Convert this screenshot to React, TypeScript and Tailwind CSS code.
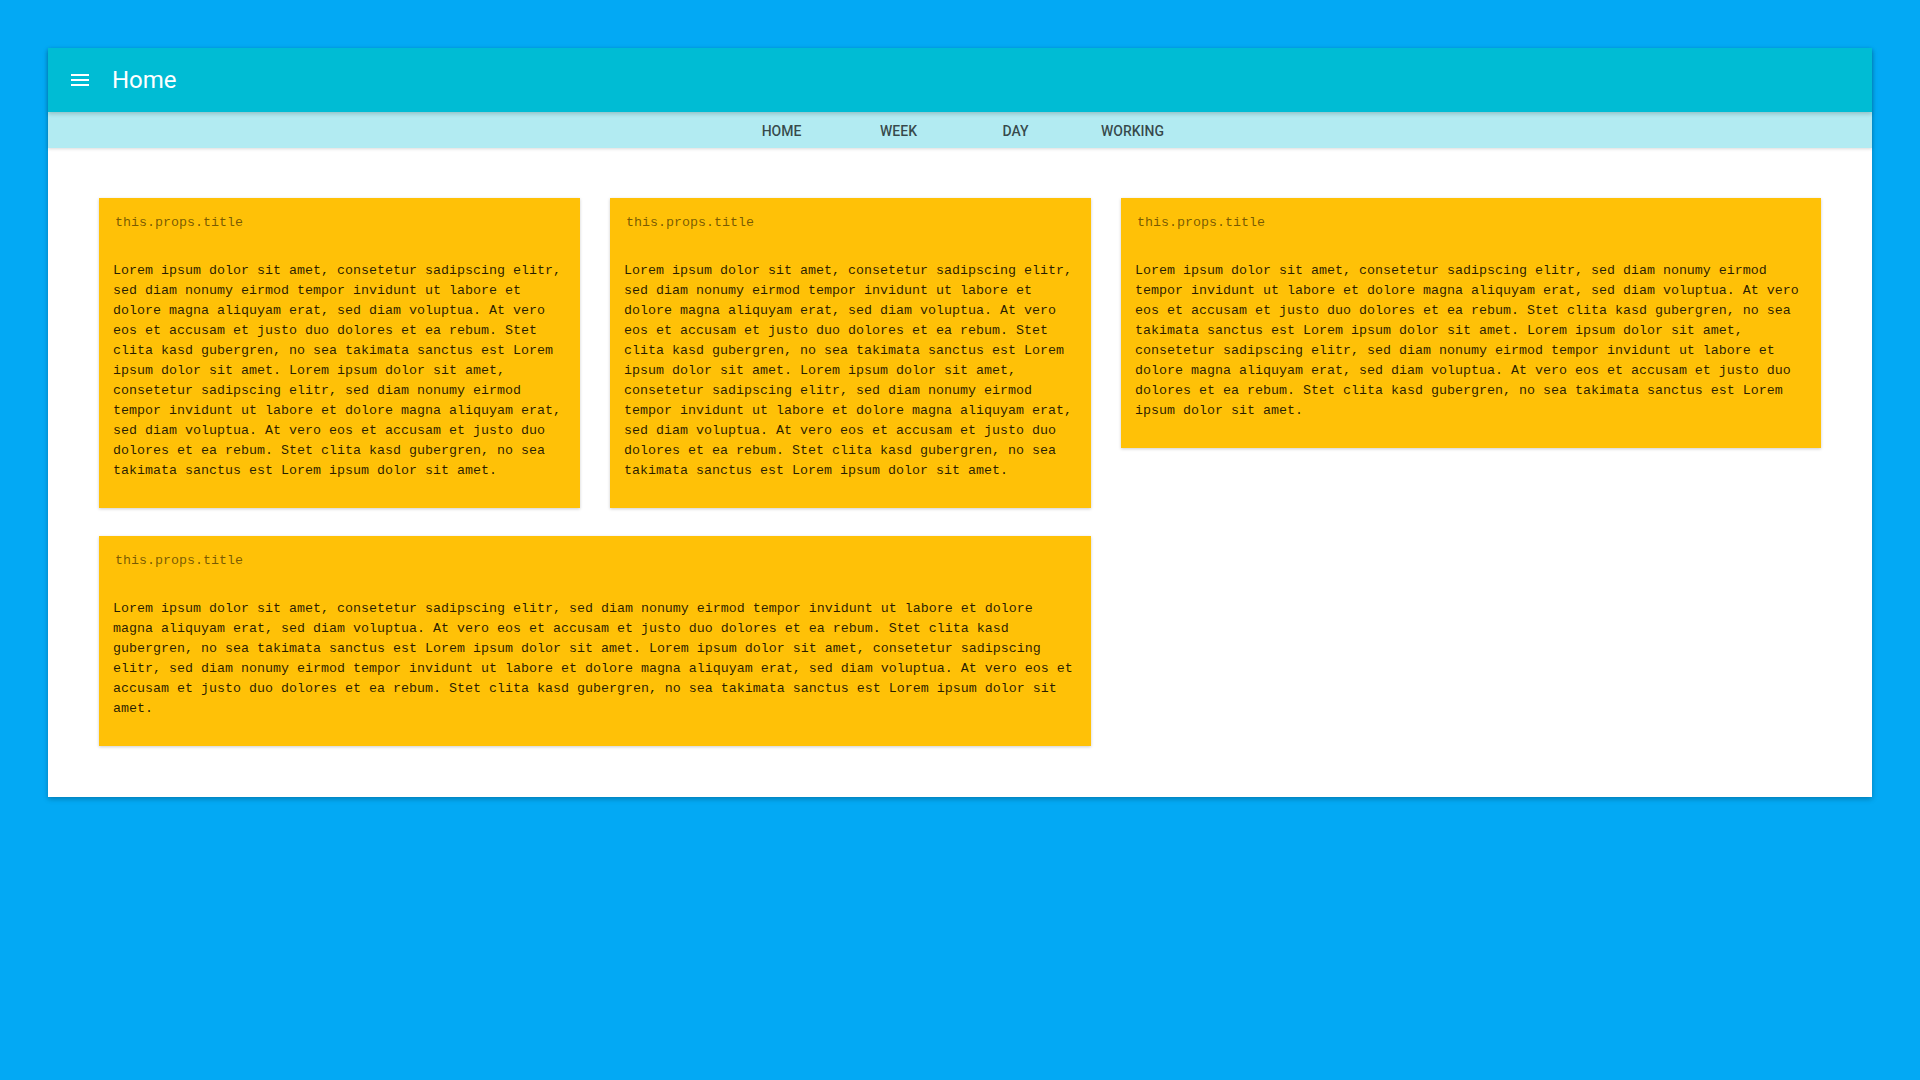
import React from "react";

const LOREM_LONG =
  "Lorem ipsum dolor sit amet, consetetur sadipscing elitr, sed diam nonumy eirmod tempor invidunt ut labore et dolore magna aliquyam erat, sed diam voluptua. At vero eos et accusam et justo duo dolores et ea rebum. Stet clita kasd gubergren, no sea takimata sanctus est Lorem ipsum dolor sit amet. Lorem ipsum dolor sit amet, consetetur sadipscing elitr, sed diam nonumy eirmod tempor invidunt ut labore et dolore magna aliquyam erat, sed diam voluptua. At vero eos et accusam et justo duo dolores et ea rebum. Stet clita kasd gubergren, no sea takimata sanctus est Lorem ipsum dolor sit amet.";

const tabs = ["Home", "Week", "Day", "Working"];

function Card({ className = "" }: { className?: string }) {
  return (
    <div
      className={`bg-[#FFC107] shadow-[0_1px_3px_rgba(0,0,0,0.2)] pt-[15px] pb-[27px] font-['Liberation_Mono',monospace] text-[10pt] leading-[20px] ${className}`}
    >
      <div className="pl-[16px] text-black/55">this.props.title</div>
      <p className="mt-[28px] pl-[14px] pr-[14px] text-black/85">{LOREM_LONG}</p>
    </div>
  );
}

export default function App() {
  return (
    <div className="min-h-screen w-full bg-[#03A9F4] pt-12 px-12">
      <div className="bg-white shadow-[0_2px_5px_rgba(0,0,0,0.26)]">
        {/* Top app bar */}
        <header className="relative z-20 h-16 bg-[#00BCD4] flex items-center pl-5 shadow-[0_2px_4px_rgba(0,0,0,0.18)]">
          <svg className="w-6 h-6 text-white" viewBox="0 0 24 24" fill="currentColor">
            <path d="M3 18h18v-2H3v2zm0-5h18v-2H3v2zm0-7v2h18V6H3z" />
          </svg>
          <h1 className="ml-5 text-white text-[24px] font-normal font-['Roboto',sans-serif] leading-none">
            Home
          </h1>
        </header>

        {/* Tabs */}
        <nav className="relative z-10 h-9 bg-[#B2EBF2] flex items-center justify-center pt-[2px] pr-[6px] shadow-[0_1px_3px_rgba(0,0,0,0.15)]">
          {tabs.map((t) => (
            <button
              key={t}
              className="w-[117px] text-center uppercase text-[14px] font-medium text-black/70 font-['Roboto',sans-serif]"
            >
              {t}
            </button>
          ))}
        </nav>

        {/* Cards */}
        <main className="px-[51px] pt-[50px] pb-[51px]">
          <div className="grid grid-cols-[481px_481px_700px] gap-x-[30px] gap-y-[28px] items-start">
            <Card />
            <Card />
            <Card />
            <Card className="col-span-2" />
          </div>
        </main>
      </div>
    </div>
  );
}
